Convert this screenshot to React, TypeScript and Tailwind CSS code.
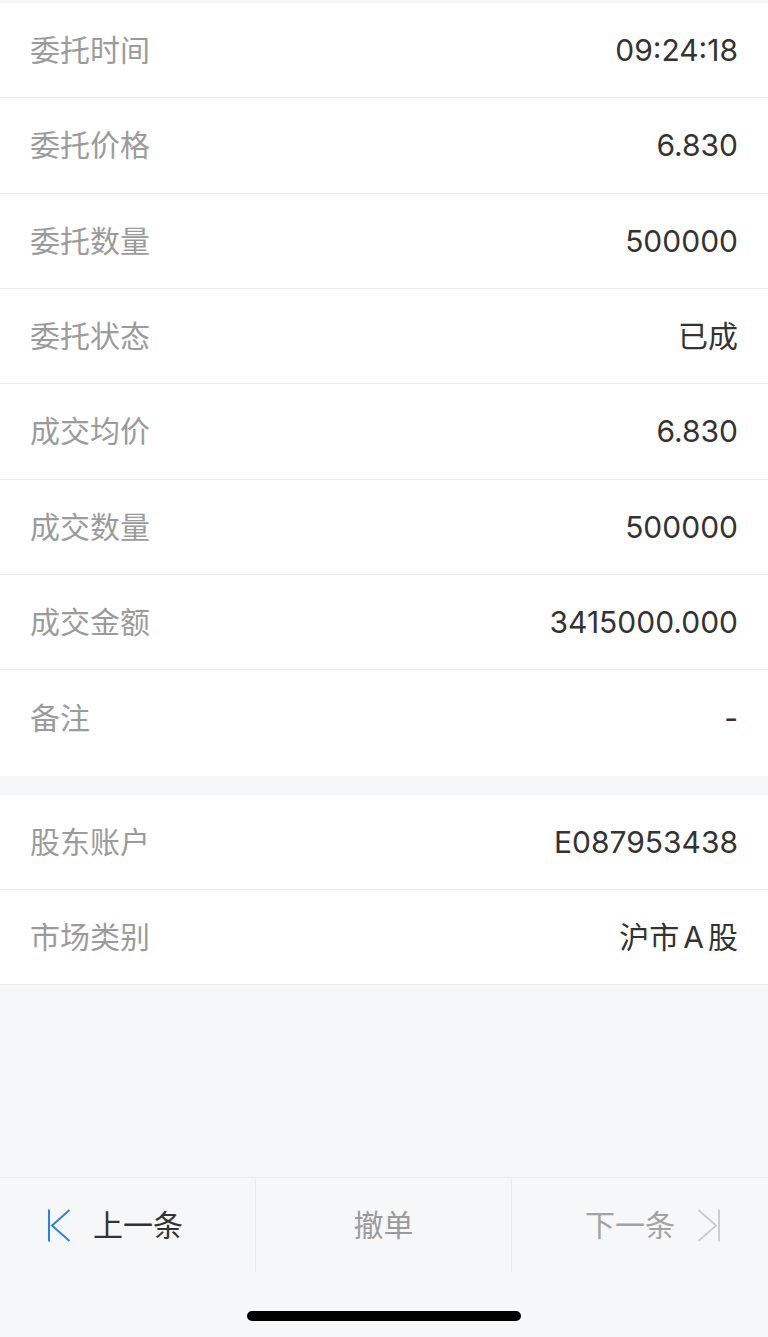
import type { ReactNode } from "react";

const font = "font-['Inter','Noto_Sans_CJK_SC',sans-serif]";

const mainRows: [string, ReactNode][] = [
  ["委托时间", "09:24:18"],
  ["委托价格", "6.830"],
  ["委托数量", "500000"],
  ["委托状态", "已成"],
  ["成交均价", "6.830"],
  ["成交数量", "500000"],
  ["成交金额", "3415000.000"],
  ["备注", "-"],
];

const accountRows: [string, ReactNode][] = [
  ["股东账户", "E087953438"],
  [
    "市场类别",
    <>
      沪市<span className="mx-[4px]">A</span>股
    </>,
  ],
];

const Row = ({ label, value, border = true }: { label: string; value: ReactNode; border?: boolean }) => (
  <div
    className={`h-[95.33px] flex items-center justify-between px-[30px] ${
      border ? "border-b border-[#ececec]" : ""
    }`}
  >
    <span className="text-[#9b9b9b]">{label}</span>
    <span className="text-[#333333]">{value}</span>
  </div>
);

const FirstIcon = () => (
  <svg width="24" height="33" viewBox="0 0 24 33" fill="none" stroke="#2f80e2" strokeWidth="2">
    <line x1="2" y1="0.5" x2="2" y2="32.5" />
    <polyline points="22.5,1 5,16.5 22.5,32" strokeLinejoin="miter" />
  </svg>
);

const LastIcon = () => (
  <svg width="24" height="33" viewBox="0 0 24 33" fill="none" stroke="#cdcdcd" strokeWidth="2">
    <polyline points="1.5,1 19,16.5 1.5,32" strokeLinejoin="miter" />
    <line x1="22" y1="0.5" x2="22" y2="32.5" />
  </svg>
);

export default function App() {
  return (
    <div className={`h-[1337px] w-[768px] bg-[#f5f6f8] flex flex-col pt-[3px] text-[30px] leading-none ${font}`}>
      <div className="bg-white pb-[10px]">
        {mainRows.map(([l, v], i) => (
          <Row key={l} label={l} value={v} border={i < mainRows.length - 1} />
        ))}
      </div>

      <div className="bg-white mt-[19px]">
        {accountRows.map(([l, v]) => (
          <Row key={l} label={l} value={v} />
        ))}
      </div>

      <div className="mt-auto border-t border-[#ececec] bg-[#f6f7f9]">
        <div className="grid grid-cols-3 h-[94px]">
          <button className="flex items-center justify-start gap-[22px] pl-[47px] border-r border-[#ececec]">
            <FirstIcon />
            <span className="text-[#333333]">上一条</span>
          </button>
          <button className="flex items-center justify-center border-r border-[#ececec]">
            <span className="text-[#9b9b9b]">撤单</span>
          </button>
          <button className="flex items-center justify-end gap-[22px] pr-[47px]">
            <span className="text-[#a3a3a3]">下一条</span>
            <LastIcon />
          </button>
        </div>
        <div className="h-[65px] flex justify-center pt-[39px]">
          <div className="w-[274px] h-[10px] rounded-full bg-black" />
        </div>
      </div>
    </div>
  );
}
